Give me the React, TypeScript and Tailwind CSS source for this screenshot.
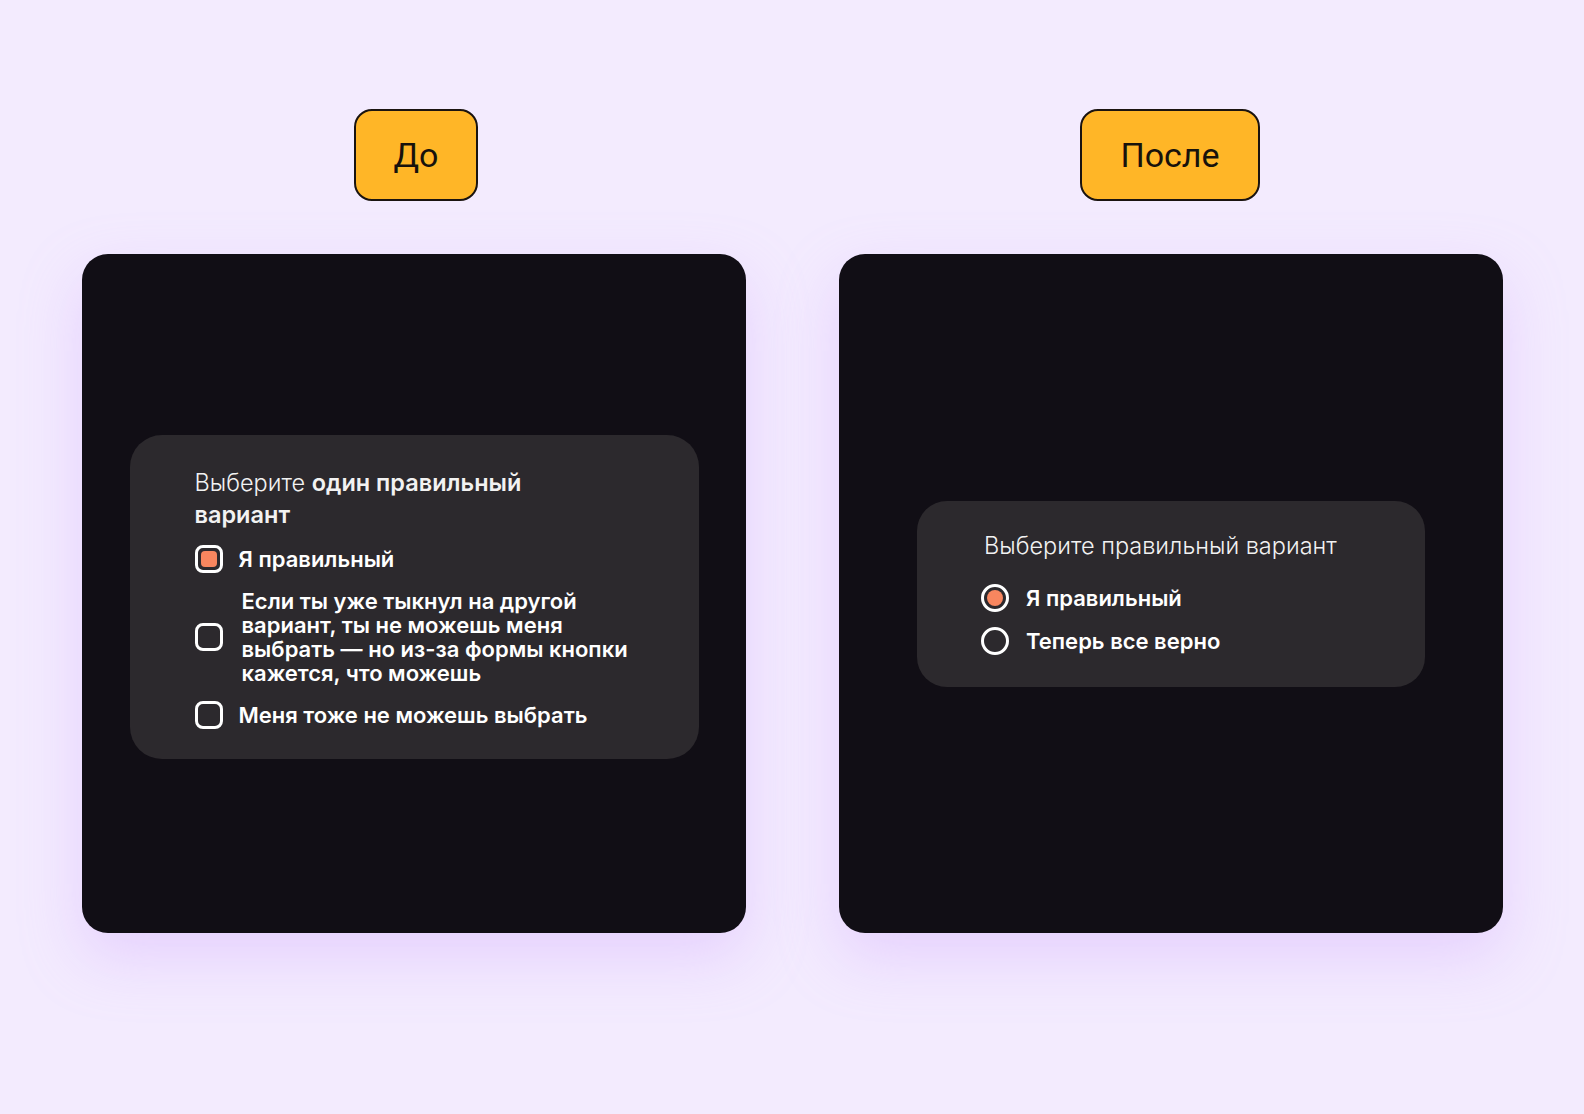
import type { ReactNode } from 'react';

const font = { fontFamily: 'Inter, "Noto Sans", sans-serif' };

function Checkbox({ checked }: { checked?: boolean }) {
  return (
    <div className="w-[28px] h-[28px] shrink-0 rounded-[8px] border-[3px] border-white flex items-center justify-center">
      {checked && <div className="w-[16px] h-[16px] rounded-[4px] bg-[#f8865f]" />}
    </div>
  );
}

function Radio({ checked }: { checked?: boolean }) {
  return (
    <div className="-ml-[3px] w-[28px] h-[28px] shrink-0 rounded-full border-[3px] border-white flex items-center justify-center">
      {checked && <div className="w-[16px] h-[16px] rounded-full bg-[#f8865f]" />}
    </div>
  );
}

function Label({ children, className }: { children: ReactNode; className: string }) {
  return (
    <div
      className={`${className} h-[92px] rounded-[18px] border-2 border-[#1a1410] bg-[#ffb627] flex items-center justify-center text-[34px] text-[#17120c]`}
      style={{ fontFamily: 'Roboto, "Liberation Sans", sans-serif' }}
    >
      {children}
    </div>
  );
}

function Panel({ children }: { children: ReactNode }) {
  return (
    <div className="mt-[53px] w-full h-[679px] rounded-[26px] bg-[#110e15] shadow-[0_24px_60px_rgba(205,160,255,0.35)] flex items-center justify-center">
      {children}
    </div>
  );
}

export default function App() {
  return (
    <div className="w-full h-[1114px] bg-[#f3ebfe] flex gap-[93px] pl-[82px] pt-[109px]" style={font}>
      {/* До */}
      <div className="w-[664px] flex flex-col items-center">
        <Label className="w-[124px] ml-[4px]">До</Label>
        <Panel>
          <div className="mt-[6px] w-[569px] rounded-[32px] bg-[#2c292d] pl-[65px] pt-[32px] pb-[30px] text-white">
            <div className="text-[23.5px] leading-[32px] text-[#f2f2f2]">
              <span className="font-light">Выберите </span>
              <span className="font-semibold">один правильный</span>
              <br />
              <span className="font-semibold">вариант</span>
            </div>
            <div className="mt-[14px] flex items-center gap-[16px]">
              <Checkbox checked />
              <span className="text-[22px] font-semibold leading-[28px]">Я правильный</span>
            </div>
            <div className="mt-[16px] flex items-center gap-[19px]">
              <Checkbox />
              <span className="text-[22px] font-semibold leading-[24px]">
                Если ты уже тыкнул на другой
                <br />
                вариант, ты не можешь меня
                <br />
                выбрать — но из-за формы кнопки
                <br />
                кажется, что можешь
              </span>
            </div>
            <div className="mt-[16px] flex items-center gap-[16px]">
              <Checkbox />
              <span className="text-[22px] font-semibold leading-[28px]">Меня тоже не можешь выбрать</span>
            </div>
          </div>
        </Panel>
      </div>

      {/* После */}
      <div className="w-[664px] flex flex-col items-center">
        <Label className="w-[180px] -ml-[2px]">После</Label>
        <Panel>
          <div className="w-[508px] rounded-[30px] bg-[#2c292d] pl-[67px] pt-[29px] pb-[32px] text-white">
            <div className="text-[23.5px] leading-[32px] font-light text-[#f2f2f2]">Выберите правильный вариант</div>
            <div className="mt-[22px] flex items-center gap-[17px]">
              <Radio checked />
              <span className="text-[22px] font-semibold leading-[28px]">Я правильный</span>
            </div>
            <div className="mt-[15px] flex items-center gap-[17px]">
              <Radio />
              <span className="text-[22px] font-semibold leading-[28px]">Теперь все верно</span>
            </div>
          </div>
        </Panel>
      </div>
    </div>
  );
}
